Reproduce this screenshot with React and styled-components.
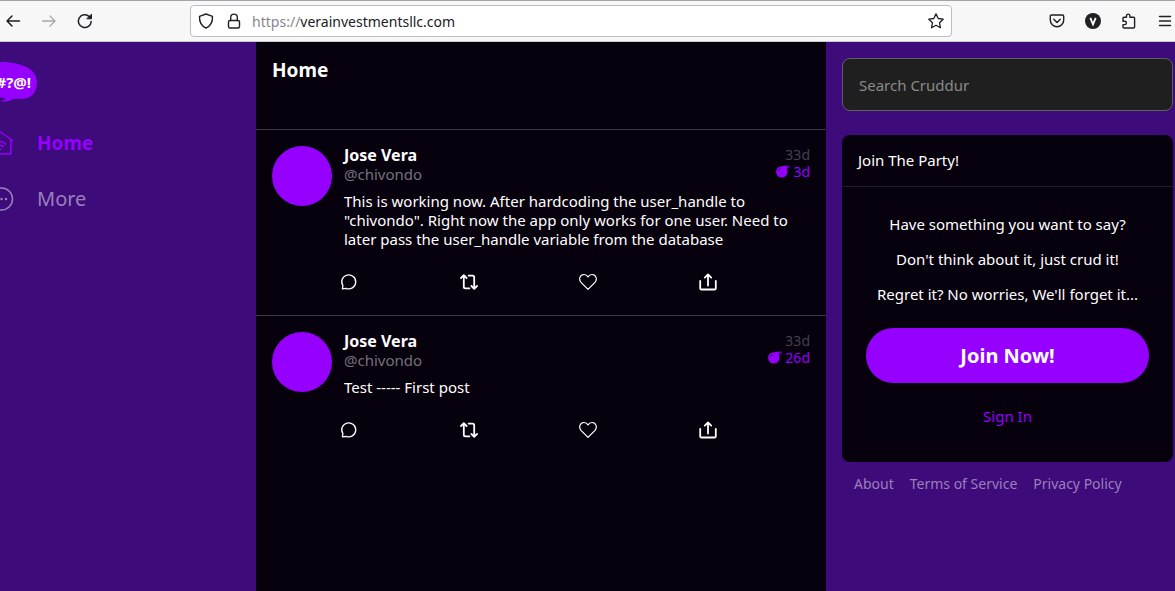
import React from "react";
import styled, { createGlobalStyle, css } from "styled-components";

const GlobalStyle = createGlobalStyle`
  *, *::before, *::after { box-sizing: border-box; }
  html, body { margin: 0; height: 100%; }
  #root { height: 100%; }
  body {
    background: #3d0b7a;
    color: #fff;
    font-family: "Noto Sans", "Open Sans", sans-serif;
    font-size: 15px;
    line-height: 19px;
    overflow-x: hidden;
  }
  button, input { font: inherit; }
  button { border: 0; padding: 0; background: none; color: inherit; cursor: pointer; }
  a { color: inherit; text-decoration: none; }
  h1, h2, p { margin: 0; font-size: inherit; font-weight: inherit; }
  svg { display: block; flex: none; }
`;

const Window = styled.div`
  display: flex;
  flex-direction: column;
  min-height: 100%;
`;

/* Browser toolbar */

const Toolbar = styled.header`
  display: flex;
  align-items: center;
  justify-content: space-between;
  height: 42px;
  padding-left: 3px;
  background: #f7f7f8;
  border-top: 1px solid #a3a2a5;
  border-bottom: 1px solid #cccccf;
  color: #202024;
`;

const ToolGroup = styled.div`
  display: flex;
  align-items: center;
  gap: 16px;
`;

const ToolButton = styled.button`
  display: grid;
  place-items: center;
  width: 20px;
  height: 28px;
  color: ${(p) => (p.disabled ? "#a8a8ab" : "#202024")};
`;

const AddressBar = styled.div`
  display: flex;
  align-items: center;
  gap: 8px;
  width: 65%;
  height: 32px;
  padding: 0 5px;
  background: #fff;
  border: 1px solid #bebec2;
  border-radius: 4px;
`;

const Address = styled.div`
  flex: 1;
  font-size: 14px;
  color: #202024;
  span { color: #87878a; }
`;

/* App columns */

const Columns = styled.div`
  flex: 1;
  display: grid;
  grid-template-columns: 256px minmax(0, 1fr) 349px;
`;

const Nav = styled.nav`
  display: flex;
  flex-direction: column;
  margin-left: -10px;
  padding-top: 18px;
`;

const Logo = styled.a`
  height: 46px;
  margin-bottom: 9px;
`;

const LogoText = styled.text`
  fill: #fff;
  font-size: 15px;
  font-weight: 700;
  text-anchor: end;
`;

const NavLink = styled.a`
  display: flex;
  align-items: center;
  gap: 23px;
  height: 56px;
  font-size: 20px;
  line-height: 24px;
  color: #9a7fbc;
  ${(p) =>
    p.$active &&
    css`
      color: #9500ff;
      font-size: 19px;
      font-weight: 700;
    `}
`;

const Feed = styled.main`
  background: #07000d;
`;

const FeedTitle = styled.h1`
  height: 87px;
  padding: 16px;
  font-size: 19px;
  line-height: 24px;
  font-weight: 700;
`;

const Activity = styled.article`
  display: flex;
  align-items: flex-start;
  padding: 16px;
  border-top: 1px solid #3d3b49;
`;

const Avatar = styled.div`
  flex: none;
  width: 60px;
  height: 60px;
  border-radius: 50%;
  background: #9500ff;
`;

const ActivityBody = styled.div`
  flex: 1;
  min-width: 0;
`;

const ActivityHead = styled.div`
  display: flex;
  justify-content: space-between;
  padding-left: 12px;
`;

const Identity = styled.a`
  display: flex;
  flex-direction: column;
  color: #76727c;
  strong { color: #fff; font-size: 16px; font-weight: 700; }
`;

const Times = styled.div`
  display: flex;
  flex-direction: column;
  align-items: flex-end;
  font-size: 14px;
  line-height: 17px;
  color: #42424f;
`;

const Expires = styled.div`
  display: flex;
  align-items: center;
  gap: 3px;
  color: #9500ff;
`;

const Message = styled.p`
  padding: 8px 0 0 12px;
`;

const Actions = styled.div`
  display: grid;
  grid-template-columns: repeat(4, 1fr);
  margin-top: 16px;
`;

const ActionButton = styled.button`
  display: flex;
  align-items: center;
  height: 34px;
  padding: 0 8px;
`;

const Sidebar = styled.aside`
  padding: 16px 2px 16px 16px;
`;

const Search = styled.input`
  display: block;
  width: 100%;
  height: 53px;
  padding: 0 16px;
  background: #1f1f1f;
  border: 1px solid #5f5f5f;
  border-radius: 8px;
  color: #fff;
  &::placeholder { color: #8a8a8a; opacity: 1; }
`;

const JoinCard = styled.section`
  margin-top: 24px;
  background: #07000d;
  border-radius: 8px;
`;

const JoinTitle = styled.h2`
  padding: 16px;
  border-bottom: 1px solid #1d1d2b;
`;

const JoinBody = styled.div`
  display: flex;
  flex-direction: column;
  gap: 16px;
  padding: 28px 24px 36px;
  text-align: center;
`;

const JoinButton = styled.button`
  height: 55px;
  margin: 8px 0;
  border-radius: 28px;
  background: #9500ff;
  color: #fff;
  font-size: 20px;
  font-weight: 700;
`;

const SignIn = styled.a`
  color: #9500ff;
`;

const Footer = styled.footer`
  display: flex;
  gap: 16px;
  padding: 12px;
  font-size: 14px;
  color: #9a7fbc;
`;

const Line = ({ size = 16, width = 1.3, children }) => (
  <svg
    width={size}
    height={size}
    viewBox={`0 0 ${size} ${size}`}
    fill="none"
    stroke="currentColor"
    strokeWidth={width}
    strokeLinecap="round"
    strokeLinejoin="round"
    aria-hidden="true"
  >
    {children}
  </svg>
);

const BombIcon = () => (
  <svg width="14" height="14" viewBox="0 0 14 14" aria-hidden="true">
    <circle cx="5.8" cy="6.900" r="5.700" fill="currentColor" />
    <path d="M6 1.500 9 .6l1.300.6 3.400.2v1.200h-2.200L11 4.500z" fill="currentColor" />
    <path d="M10.800.2v.7M12.600 0v.7" stroke="currentColor" strokeWidth=".8" />
    <path d="M2.300 6.200c.3-1.500 1.300-2.400 2.700-2.700" stroke="#07000d" strokeWidth=".7" fill="none" />
  </svg>
);

const actionIcons = [
  {
    label: "Reply",
    icon: (
      <Line size={18} width={1.3}>
        <path d="M2.400 15.900l.5-3.200A7 7 0 1 1 6 15.300z" />
      </Line>
    ),
  },
  {
    label: "Repost",
    icon: (
      <Line size={18} width={1.8}>
        <path d="M1 5l2.800-2.800L6.600 5M3.800 2.600v11.200c0 1 .6 1.600 1.600 1.600h4M17 13l-2.800 2.800-2.800-2.800M14.200 15.400V4.200c0-1-.6-1.600-1.600-1.600h-4" />
      </Line>
    ),
  },
  {
    label: "Like",
    icon: (
      <Line size={18} width={1.2}>
        <path d="M9 16.400 2 9.300C-.4 6.700.6 1.500 5 1.500c2 0 3.300 1.300 4 2.400.7-1.100 2-2.400 4-2.400 4.400 0 5.400 5.200 3 7.800z" />
      </Line>
    ),
  },
  {
    label: "Share",
    icon: (
      <Line size={18} width={1.8}>
        <path d="M1.200 8v7.200c0 .8.500 1.300 1.300 1.300h13c.8 0 1.300-.5 1.300-1.300V8M9 12.600V1.600M5.800 4.600 9 1.400l3.200 3.200" />
      </Line>
    ),
  },
];

const posts = [
  {
    id: 1,
    expires: "3d",
    message:
      'This is working now. After hardcoding the user_handle to "chivondo". Right now the app only works for one user. Need to later pass the user_handle variable from the database',
  },
  { id: 2, expires: "26d", message: "Test ----- First post" },
];

function BrowserBar() {
  return (
    <Toolbar>
      <ToolGroup>
        <ToolButton aria-label="Back">
          <Line width={1.5}><path d="M14.500 8H2M7 3 2 8l5 5" /></Line>
        </ToolButton>
        <ToolButton aria-label="Forward" disabled>
          <Line width={1.3}><path d="M1.500 8H14M9 3l5 5-5 5" /></Line>
        </ToolButton>
        <ToolButton aria-label="Reload">
          <Line width={1.5}>
            <path d="M14.200 8.500A6.400 6.400 0 1 1 12.300 3.600" />
            <path d="M14.500 1.500v4.300h-4.300z" fill="currentColor" strokeWidth="1" />
          </Line>
        </ToolButton>
      </ToolGroup>
      <AddressBar>
        <ToolButton aria-label="Tracking protection">
          <Line width={1.4}><path d="M8 1 14.500 3.300C14.700 9 12.500 13.200 8 15 3.500 13.200 1.300 9 1.500 3.300z" /></Line>
        </ToolButton>
        <ToolButton aria-label="Site security">
          <Line width={1.4}>
            <rect x="2.500" y="7.500" width="11" height="7.500" rx="1.500" />
            <path d="M4.700 7.500V4.400a3.300 3.300 0 0 1 6.600 0v3.100" />
          </Line>
        </ToolButton>
        <Address><span>https://</span>verainvestmentsllc.com</Address>
        <ToolButton aria-label="Bookmark this page">
          <Line width={1.3}><path d="m8 .9 2.200 4.600 5 .7-3.700 3.500.9 5L8 12.300l-4.400 2.400.9-5L.8 6.200l5-.7z" /></Line>
        </ToolButton>
      </AddressBar>
      <ToolGroup>
        <ToolButton aria-label="Pocket">
          <Line width={1.4}>
            <path d="M2.500 2h11c.7 0 1.200.5 1.200 1.200V7a6.700 6.700 0 0 1-13.400 0V3.200C1.300 2.500 1.800 2 2.500 2z" />
            <path d="M4.800 6.300 8 9.400l3.200-3.100" />
          </Line>
        </ToolButton>
        <ToolButton aria-label="Account">
          <svg width="16" height="16" viewBox="0 0 16 16" aria-hidden="true">
            <circle cx="8" cy="8" r="8" fill="#202024" />
            <path d="m5.300 4.800 2.700 6.600 2.700-6.600" fill="none" stroke="#fff" strokeWidth="1.800" />
          </svg>
        </ToolButton>
        <ToolButton aria-label="Extensions">
          <Line width={1.4}>
            <path d="M2 5.300c0-.7.400-1 1-1h2.500V2.800a1.700 1.700 0 0 1 3.400 0v1.500h3.600c.7 0 1.100.4 1.100 1V14c0 .7-.4 1-1 1H3c-.6 0-1-.3-1-1v-2.400h1.700a1.700 1.700 0 0 0 0-3.400H2z" />
          </Line>
        </ToolButton>
        <ToolButton aria-label="Menu">
          <Line width={1.4}><path d="M2.500 3.500h11M2.500 8h11M2.500 12.500h11" /></Line>
        </ToolButton>
      </ToolGroup>
    </Toolbar>
  );
}

function ActivityItem({ post }) {
  return (
    <Activity>
      <Avatar />
      <ActivityBody>
        <ActivityHead>
          <Identity href="#chivondo">
            <strong>Jose Vera</strong>
            <span>@chivondo</span>
          </Identity>
          <Times>
            <span>33d</span>
            <Expires><BombIcon />{post.expires}</Expires>
          </Times>
        </ActivityHead>
        <Message>{post.message}</Message>
        <Actions>
          {actionIcons.map((a) => (
            <ActionButton key={a.label} aria-label={a.label}>{a.icon}</ActionButton>
          ))}
        </Actions>
      </ActivityBody>
    </Activity>
  );
}

export default function App() {
  return (
    <Window>
      <GlobalStyle />
      <BrowserBar />
      <Columns>
        <Nav>
          <Logo href="#top" aria-label="Cruddur">
            <svg width="48" height="46" viewBox="-10 60 48 46" aria-hidden="true">
              <path d="M-10 66C-4 61 8 61 18 64c12 3 19 9 19 18 0 11-6 17-16 17-3 0-6-.5-8 0-3 2-7 3.500-13 2 4-.7 5-2 5-3-7 0-12-2-15-7z" fill="#9500ff" />
              <LogoText x="31" y="88">#?@!</LogoText>
            </svg>
          </Logo>
          <NavLink href="#home" $active>
            <Line size={24} width={1.5}>
              <path d="M1 10 10.500 1l12 8.500M20.800 9v14H2V9" />
              <path d="M5.500 13c2.800-3.200 7.500-3.200 10 0M7.700 15.700c1.600-1.800 4.200-1.800 5.600 0M10.500 18.300v.1" />
            </Line>
            Home
          </NavLink>
          <NavLink href="#more">
            <Line size={24} width={1.5}>
              <circle cx="11.500" cy="12" r="11" />
              <path d="M7 12h.1M11.500 12h.1M16 12h.1" strokeWidth="2.400" />
            </Line>
            More
          </NavLink>
        </Nav>
        <Feed>
          <FeedTitle>Home</FeedTitle>
          {posts.map((post) => <ActivityItem key={post.id} post={post} />)}
        </Feed>
        <Sidebar>
          <Search type="search" placeholder="Search Cruddur" aria-label="Search Cruddur" />
          <JoinCard>
            <JoinTitle>Join The Party!</JoinTitle>
            <JoinBody>
              <p>Have something you want to say?</p>
              <p>Don't think about it, just crud it!</p>
              <p>Regret it? No worries, We'll forget it...</p>
              <JoinButton>Join Now!</JoinButton>
              <SignIn href="#signin">Sign In</SignIn>
            </JoinBody>
          </JoinCard>
          <Footer>
            <a href="#about">About</a>
            <a href="#terms">Terms of Service</a>
            <a href="#privacy">Privacy Policy</a>
          </Footer>
        </Sidebar>
      </Columns>
    </Window>
  );
}
